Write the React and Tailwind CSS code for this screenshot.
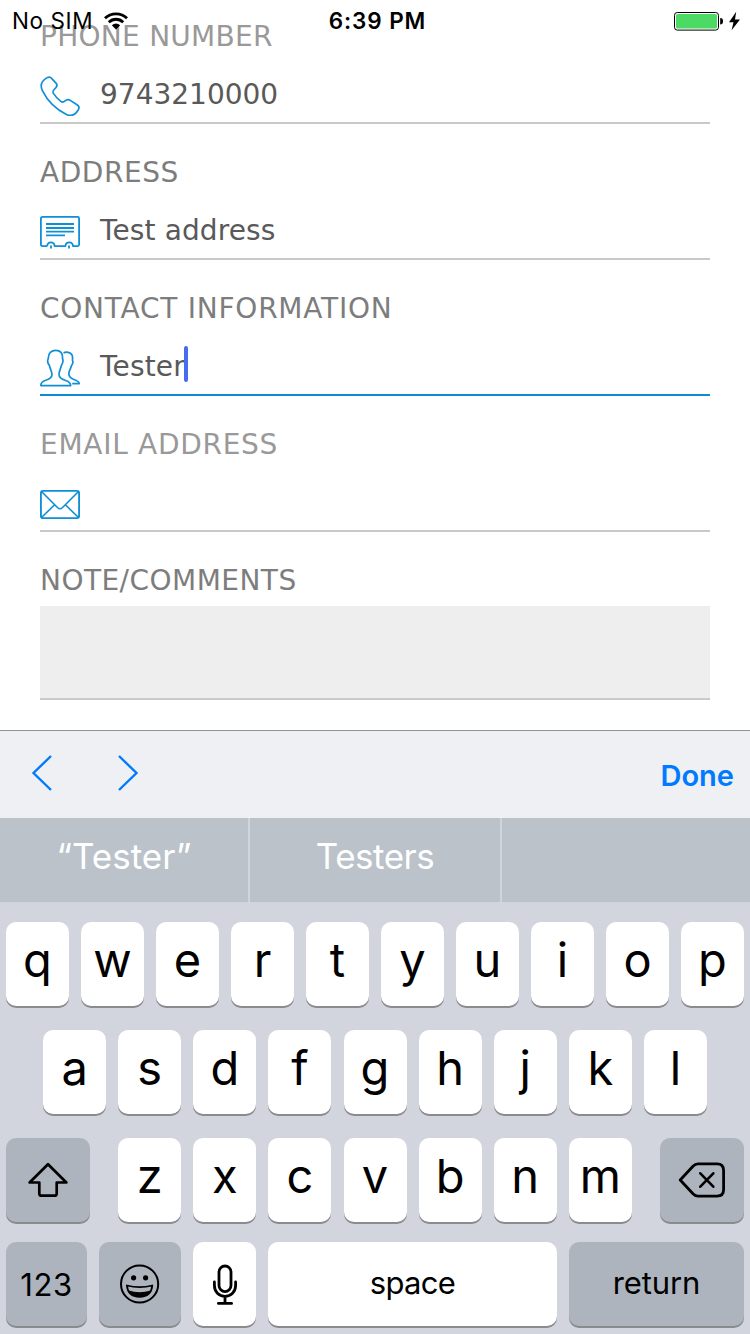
import React from "react";

const PhoneIcon = () => (
  <svg width="40" height="40" viewBox="0 0 40 40" fill="none" stroke="#0e8fd6" strokeWidth="1.7" strokeLinejoin="round">
    <path d="M5.6 2.6C8 .7 10.4.6 11.6 2.4L16.2 7.4C17.4 8.9 17.2 10.2 15.9 11.6C12.8 14.4 12.2 15.6 13.4 17.4C15.4 20.4 18 23.4 20.8 25.4C22.4 26.5 23.5 26.4 24.9 25C26.8 23.4 28.5 23.2 30.3 24.4L37.4 29C39.4 30.4 39.6 31.8 38.2 34C35.4 38.6 31 40.6 26.4 38.4C16.5 33.5 7.5 25 2.4 14.6C.1 9.8.5 6.2 5.6 2.6Z" />
  </svg>
);

const AddressIcon = () => (
  <svg width="40" height="40" viewBox="0 0 40 40" fill="none" stroke="#0e8fd6" strokeWidth="1.8">
    <path d="M7.2 34.1H2.4Q.9 34.1.9 32.6V6.4Q.9 4.9 2.4 4.9H37.6Q39.1 4.9 39.1 6.4V32.6Q39.1 34.1 37.6 34.1H33C32.6 29.2 26 29.2 25.4 34.1H14.6C14.2 29.2 7.6 29.2 7.2 34.1" strokeLinejoin="round" />
    <path d="M6 12H34M6 16H34M6 19.7H34M6 23.3H25M11 33.4V36.4M29 33.4V36.4" />
  </svg>
);

const ContactsIcon = () => (
  <svg width="40" height="40" viewBox="0 0 40 40" fill="none" stroke="#0e8fd6" strokeWidth="1.7" strokeLinejoin="round">
    <path d="M.9 37.6C.7 34.6 2.4 33.4 5.2 32.5C9.6 31.1 12 29.4 12 26.5C12 23.2 10.2 21.9 9.4 17.4C7.6 15.2 7.2 12.7 8.3 10.6C8.1 5 11.4 2.4 15.8 2.4C20.2 2.4 23 5 22.5 10.6C23.6 12.7 22.8 15.2 21.4 17.4C20.4 22 19 23.2 19 26.5C19 29.4 21.4 31.1 25.6 32.5C29.2 33.7 30.7 35 30.7 37.6Z" />
    <path d="M23.5 4.9C25 4.1 26.6 4.1 28.2 4.4C31.6 5 33.2 7.6 32.4 12.1C33.6 14.3 32.6 16.4 31.2 18.2C30.3 22 28.8 23.2 28.8 25.7C28.8 28.5 30.8 30.3 34.6 31.8C38 33.1 39.2 33.8 39.2 35.7H32.2" />
  </svg>
);

const MailIcon = () => (
  <svg width="40" height="40" viewBox="0 0 40 40" fill="none" stroke="#0e8fd6" strokeWidth="1.9" strokeLinejoin="round">
    <rect x="0.9" y="6.9" width="38.2" height="27.2" rx="2" />
    <path d="M1.5 7.5L17.2 23.2Q20 26.2 22.8 23.2L38.5 7.5M1.5 33.5L14.4 21M38.5 33.5L25.6 21" strokeWidth="1.6" />
  </svg>
);

function Field({ label, labelClass, icon, value, valueClass = "", active }) {
  return (
    <div className={`flex h-[136px] flex-col border-b-2 pt-[29px] ${active ? "border-[#0a8bd3]" : "border-[#c9c9c9]"}`}>
      <label className={`h-10 whitespace-nowrap leading-10 ${labelClass}`}>{label}</label>
      <div className="flex h-[65px] pt-[17px]">
        <span className="mr-5 pt-[2px]">{icon}</span>
        <span className={`h-10 pt-px leading-10 text-[#595959] ${valueClass}`}>{value}</span>
        {active && <span className="-ml-px h-9 w-1 rounded-full bg-[#466df0]" />}
      </div>
    </div>
  );
}

function Key({ children, className = "w-[63px] bg-white", textClass = "text-[47px] font-normal leading-[76px]" }) {
  return (
    <button className={`flex h-[84px] shrink-0 justify-center rounded-[10px] shadow-[0_2px_0_#898b8f] ${className}`}>
      <span className={textClass}>{children}</span>
    </button>
  );
}

const ShiftIcon = () => (
  <svg width="42" height="36" viewBox="0 0 42 36" fill="none" stroke="#000" strokeWidth="2.7" strokeLinejoin="round">
    <path d="M21 2.3L2.6 20.5H12.3V31.4Q12.3 33.7 14.6 33.7H27.4Q29.7 33.7 29.7 31.4V20.5H39.4Z" />
  </svg>
);

const DeleteIcon = () => (
  <svg width="48" height="36" viewBox="0 0 48 36" fill="none" stroke="#000" strokeWidth="2.8" strokeLinejoin="round" strokeLinecap="round">
    <path d="M2.2 18L15 4.2Q17.3 1.8 20 1.8H39Q45.6 1.8 45.6 8.4V27.6Q45.6 34.2 39 34.2H20Q17.3 34.2 15 31.8Z" />
    <path d="M22.3 11.3L35.3 24.7M35.3 11.3L22.3 24.7" strokeWidth="2.6" />
  </svg>
);

const EmojiIcon = () => (
  <svg className="-mt-px" width="40" height="40" viewBox="0 0 40 40" fill="none" stroke="#000">
    <circle cx="19.6" cy="20" r="18.6" strokeWidth="2" />
    <circle cx="13.6" cy="13.8" r="2.6" fill="#000" stroke="none" />
    <circle cx="25.6" cy="13.8" r="2.6" fill="#000" stroke="none" />
    <path d="M6.9 21.5Q19.6 24.8 32.3 21.5C31.6 29.5 26.6 32.8 19.6 32.8S7.6 29.5 6.9 21.5Z" strokeWidth="1.8" strokeLinejoin="round" />
    <path d="M8.6 26.5Q19.6 30 30.6 26.5C28.6 31 24.6 33 19.6 33S10.6 31 8.6 26.5Z" fill="#000" stroke="none" />
  </svg>
);

const MicIcon = () => (
  <svg className="mt-[2px]" width="26" height="42" viewBox="0 0 26 42" fill="none" stroke="#000" strokeWidth="2.8" strokeLinecap="round">
    <rect x="7" y="2" width="12" height="25.6" rx="6" />
    <path d="M2.4 18V21.2C2.4 28 7 32.4 13 32.4S23.6 28 23.6 21.2V18M13 33V39.4M6.4 39.4H19.6" />
  </svg>
);

export default function App() {
  return (
    <div className="relative flex h-[1334px] w-[750px] flex-col overflow-hidden bg-white font-['Inter',sans-serif] text-black">
      <header className="absolute inset-x-0 top-0 z-10 grid h-10 grid-cols-3 items-center">
        <div className="flex items-center pl-[12px]">
          <span className="text-[22.5px] leading-[42px] tracking-[0.6px]">No SIM</span>
          <svg className="ml-[11px]" width="24" height="18" viewBox="0 0 24 18" fill="none" stroke="#000" strokeWidth="2.8">
            <path d="M1 6.2C7 .3 17 .3 23 6.2M4.8 10.3C9 6.2 15 6.2 19.2 10.3" />
            <path d="M12 17.6L7.8 13.3Q12 9.7 16.2 13.3Z" fill="#000" stroke="none" />
          </svg>
        </div>
        <span className="pl-[5px] text-center text-[22.5px] font-semibold leading-[42px] tracking-[0.9px]">6:39 PM</span>
        <div className="flex items-center justify-end pr-[9px] pb-px">
          <svg width="68" height="20" viewBox="0 0 68 20">
            <rect x="1.5" y="1.5" width="44" height="17.6" rx="2.8" fill="#fff" stroke="#000" />
            <rect x="3" y="3" width="41" height="14.6" rx="1.6" fill="#4cd964" />
            <path d="M47.2 7Q50 7 50 10.3T47.2 13.6Z" />
            <path d="M63.2.8L56 11.2H60.5L58.6 19.2L67 8.6H62Z" />
          </svg>
        </div>
      </header>

      <main className="-mt-3 h-[742px] shrink-0 px-10 font-['DejaVu_Sans',sans-serif] text-[28px]">
        <Field label="PHONE NUMBER" labelClass="text-[#999] tracking-[0.27px]" icon={<PhoneIcon />} value="9743210000" />
        <Field label="ADDRESS" labelClass="text-[#7d7d7d] tracking-[0.55px]" icon={<AddressIcon />} value="Test address" valueClass="tracking-[0.12px]" />
        <Field label="CONTACT INFORMATION" labelClass="text-[#7d7d7d] tracking-[0.76px]" icon={<ContactsIcon />} value="Tester" valueClass="tracking-[0.16px]" active />
        <Field label="EMAIL ADDRESS" labelClass="text-[#999] tracking-[0.72px]" icon={<MailIcon />} value="" />
        <div className="flex flex-col pt-[29px]">
          <label className="h-10 leading-10 tracking-[0.46px] text-[#7d7d7d]">NOTE/COMMENTS</label>
          <div className="mt-[5px] h-[94px] border-b-2 border-[#c9c9c9] bg-[#eee]" />
        </div>
      </main>

      <section className="flex flex-1 flex-col bg-[#d2d5dd]">
        <div className="flex h-[88px] shrink-0 items-center border-t border-[#919398] bg-[#eff0f3] pl-[31px] pr-4">
          <svg className="-mt-[3px]" width="22" height="38" viewBox="0 0 22 38" fill="none" stroke="#007aff" strokeWidth="2.4">
            <path d="M20 2L2.5 19L20 36" />
          </svg>
          <svg className="-mt-[3px] ml-[64px]" width="22" height="38" viewBox="0 0 22 38" fill="none" stroke="#007aff" strokeWidth="2.4">
            <path d="M2 2L19.5 19L2 36" />
          </svg>
          <span className="ml-auto pt-[2px] text-[29px] font-semibold text-[#007aff]">Done</span>
        </div>
        <div className="flex h-[84px] shrink-0 divide-x-2 divide-[#d2d5dd] bg-[#bbc2ca] text-center text-[35px] leading-[77px] text-white">
          <span className="w-[250px]">“Tester”</span>
          <span className="w-[252px] tracking-[-0.5px]">Testers</span>
          <span className="flex-1" />
        </div>
        <div className="flex flex-col px-1.5 pt-5">
          <div className="mb-6 flex gap-3">
            {"qwertyuiop".split("").map((k) => <Key key={k}>{k}</Key>)}
          </div>
          <div className="mb-6 flex justify-center gap-[12.1px]">
            {"asdfghjkl".split("").map((k) => <Key key={k}>{k}</Key>)}
          </div>
          <div className="mb-5 flex justify-between">
            <Key className="w-[84px] items-center bg-[#adb4be]" textClass=""><ShiftIcon /></Key>
            <div className="flex gap-[12.1px]">
              {"zxcvbnm".split("").map((k) => <Key key={k}>{k}</Key>)}
            </div>
            <Key className="w-[84px] items-center bg-[#adb4be]" textClass=""><DeleteIcon /></Key>
          </div>
          <div className="flex gap-3">
            <Key className="w-[81px] bg-[#adb4be]" textClass="text-[31px] leading-[86px] tracking-[0.6px]">123</Key>
            <Key className="w-[82px] items-center bg-[#adb4be]" textClass=""><EmojiIcon /></Key>
            <Key className="w-[63px] items-center bg-white" textClass=""><MicIcon /></Key>
            <Key className="w-[289px] bg-white" textClass="text-[31px] leading-[82px] tracking-[-0.7px]">space</Key>
            <Key className="w-[175px] bg-[#adb4be]" textClass="text-[31px] leading-[82px] tracking-[-0.1px]">return</Key>
          </div>
        </div>
      </section>
    </div>
  );
}
